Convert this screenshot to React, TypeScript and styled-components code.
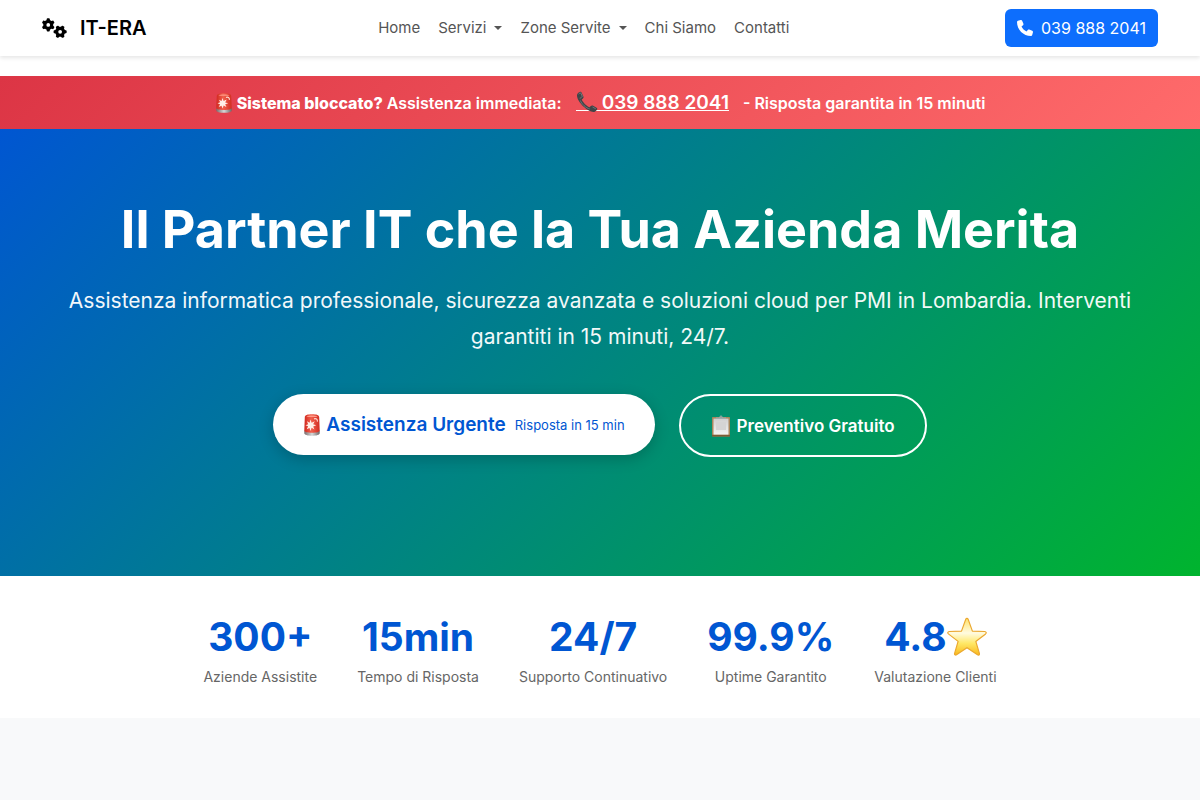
import React from "react";
import styled, { createGlobalStyle, css } from "styled-components";
import { FaGears, FaPhone } from "react-icons/fa6";

const GlobalStyle = createGlobalStyle`
  *, *::before, *::after { box-sizing: border-box; }
  html { min-height: 100%; background: #f8f9fa; }
  body {
    margin: 0;
    font-family: Inter, "Liberation Sans", sans-serif;
    font-size: 16px;
    line-height: 24px;
    color: #212529;
  }
  h1, p, ul, dl, dd { margin: 0; padding: 0; }
  a { color: inherit; text-decoration: none; }
`;

const Header = styled.header`
  background: #fff;
  padding-bottom: 20px;
`;

const NavBar = styled.nav`
  background: #fff;
  box-shadow: 0 2px 4px rgba(0, 0, 0, 0.1);
`;

const Container = styled.div`
  max-width: 1140px;
  margin: 0 auto;
  padding: 0 12px;
`;

const NavInner = styled(Container)`
  display: flex;
  align-items: center;
  justify-content: space-between;
  min-height: 56px;
`;

const Brand = styled.a`
  display: flex;
  align-items: center;
  gap: 13px;
  margin-right: 16px;
  font-size: 20px;
  font-weight: 600;
  color: #000;
  svg { width: 25px; height: 20px; }
`;

const NavList = styled.ul`
  display: flex;
  gap: 18px;
  list-style: none;
  color: #555;
`;

const NavLink = styled.a<{ $menu?: boolean }>`
  display: flex;
  align-items: center;
  font-size: 15px;
  ${({ $menu }) =>
    $menu &&
    css`
      &::after {
        content: "";
        margin-left: 8px;
        border-top: 4px solid;
        border-left: 4px solid transparent;
        border-right: 4px solid transparent;
      }
    `}
`;

const CallButton = styled.a`
  display: flex;
  align-items: center;
  gap: 8px;
  padding: 7px 12px;
  border-radius: 6px;
  background: #0d6efd;
  color: #fff;
  svg { width: 16px; height: 16px; }
`;

const Alert = styled.div`
  display: flex;
  flex-wrap: wrap;
  align-items: center;
  justify-content: center;
  gap: 0 14px;
  min-height: 53px;
  padding: 12px 16px;
  background: linear-gradient(135deg, #dc3545, #ff6b6b);
  color: #fff;
  font-size: 16px;
  font-weight: 600;
`;

const IconText = styled.span`
  display: inline-flex;
  align-items: center;
  gap: 4px;
`;

const Strong = styled.strong`
  font-weight: 800;
`;

const AlertPhone = styled.a`
  display: inline-flex;
  align-items: flex-end;
  gap: 4px;
  margin-top: 2px;
  border-bottom: 1px solid #fff;
  font-size: 19px;
  line-height: 14px;
  svg { margin: -5px 0 -3px; }
`;

const Hero = styled.section`
  padding: 60px 0 119px;
  background: linear-gradient(135deg, #0056d2, #00b42e);
  color: #fff;
  text-align: center;
`;

const Title = styled.h1`
  padding: 8px 0 20px;
  font-size: 52px;
  line-height: 66px;
  font-weight: 700;
`;

const Lead = styled.p`
  padding-bottom: 39px;
  font-size: 21px;
  line-height: 36px;
  opacity: 0.95;
`;

const Actions = styled.div`
  display: flex;
  flex-wrap: wrap;
  align-items: flex-start;
  justify-content: center;
  gap: 24px;
`;

const Action = styled.a<{ $outline?: boolean }>`
  display: inline-flex;
  align-items: center;
  padding: 16px 30px;
  border-radius: 50px;
  font-weight: 600;
  ${({ $outline }) =>
    $outline
      ? css`
          gap: 6px;
          min-height: 63px;
          border: 2px solid #fff;
          color: #fff;
          font-size: 17px;
        `
      : css`
          gap: 5px;
          min-height: 61px;
          background: #fff;
          color: #0056d2;
          font-size: 19px;
          box-shadow: 0 4px 15px rgba(0, 0, 0, 0.2);
        `}
`;

const Note = styled.small`
  margin-left: 4px;
  font-size: 13px;
  font-weight: 400;
`;

const Stats = styled.section`
  padding: 32px 16px 31px;
  background: #fff;
`;

const StatList = styled.dl`
  display: flex;
  flex-wrap: wrap;
  justify-content: center;
  gap: 24px 40px;
`;

const Stat = styled.div`
  display: flex;
  flex-direction: column-reverse;
  text-align: center;
`;

const StatValue = styled.dd`
  display: flex;
  align-items: center;
  justify-content: center;
  font-size: 39px;
  line-height: 58px;
  font-weight: 700;
  color: #0056d2;
`;

const StatLabel = styled.dt`
  font-size: 14px;
  line-height: 21px;
  color: #666;
`;

const Siren = ({ height }: { height: number }) => (
  <svg width="18" height={height} viewBox="1 0 18 20" preserveAspectRatio="none" aria-hidden="true">
    <defs>
      <linearGradient id="sirenGlass" x1="0" x2="1">
        <stop offset="0" stopColor="#d0281f" />
        <stop offset=".45" stopColor="#f2604d" />
        <stop offset="1" stopColor="#d12d22" />
      </linearGradient>
      <linearGradient id="sirenBase" x1="0" x2="1">
        <stop offset="0" stopColor="#7a6a6a" />
        <stop offset=".5" stopColor="#d5d8d8" />
        <stop offset="1" stopColor="#6e6666" />
      </linearGradient>
    </defs>
    <path d="M2.300 15h15.400v2.500c0 1.400-3.300 2.300-7.700 2.300s-7.700-.9-7.700-2.300z" fill="url(#sirenBase)" />
    <path d="M2.800 3.200C2.800 1 5.500.3 10 .3s7.200.7 7.200 2.900L17.700 15c0 1.300-3.200 2-7.700 2s-7.700-.7-7.700-2z" fill="url(#sirenGlass)" />
    <path d="M4.500 2.300C6 1.200 14 1.200 15.500 2.300 14 3 6 3 4.500 2.300z" fill="#ff9a88" />
    <path d="M8.500 5l1.100 3 3.100-1.500-1.500 2.900 3 .9-3 1 1.200 2.700-2.800-1.400-1.100 2.900-1-2.800-2.700 1.200 1.300-2.700-2.600-1 2.700-.9-1.300-2.600 2.700 1.300z" fill="#fff0e8" />
    <path d="M12 4.500c2-.8 3.600.2 3.400 2.400" fill="none" stroke="#ffd9cf" strokeWidth="1.200" />
  </svg>
);

const Receiver = () => (
  <svg width="22" height="22" viewBox="0 0 22 22" aria-hidden="true">
    <path
      d="M1.200 3.200C2.300 1.300 4.300.2 5.400 1.200l2 4.200c.5 1.200-.2 2-1.500 2.900-.5 1.800 5.700 8 7.800 8 .9-1.500 2-2.200 3-1.700l3.900 2.100c1.500.9.3 3.200-1.800 4.100C13.500 22.800-.8 10.200 1.200 3.200z"
      fill="#414447"
    />
    <path d="M2.500 3.300c.6-1 1.700-1.600 2.300-1.200l1.500 3.200c-.8 1.200-1.700 1.800-2.600 1.900" fill="none" stroke="#7b7f82" strokeWidth=".9" />
    <path d="M4.400 9.500c1 3.400 5.700 7.700 9.300 8.400M16.500 16l3.300 1.800" fill="none" stroke="#74787b" strokeWidth=".9" />
  </svg>
);

const Clipboard = () => (
  <svg width="20" height="22" viewBox="0 0 20 22" aria-hidden="true">
    <defs>
      <linearGradient id="paper" x1="0" y1="0" x2="0" y2="1">
        <stop offset="0" stopColor="#cfcfcf" />
        <stop offset="1" stopColor="#f4f4f4" />
      </linearGradient>
    </defs>
    <rect x="1" y="2" width="18" height="19.500" rx=".8" fill="#a8865c" />
    <path d="M1 19.800h18v1.700H1z" fill="#7c5c36" />
    <path d="M2.500 3.600h15v16h-15z" fill="url(#paper)" />
    <path d="M5 7h10v8H5z" fill="#d4d4d4" />
    <path d="M5 4V2.500h3C8.400 2.500 8.700.5 10 .5s1.600 2 2 2h3V4z" fill="#a3aaab" />
    <circle cx="10" cy="1.800" r=".6" fill="#4d9278" />
  </svg>
);

const Star = () => (
  <svg width="40" height="40" viewBox="0 0 40 40" aria-hidden="true">
    <defs>
      <linearGradient id="starFill" x1="0" y1="0" x2="0" y2="1">
        <stop offset="0" stopColor="#ffe26b" />
        <stop offset=".4" stopColor="#fffbe0" />
        <stop offset=".68" stopColor="#ffe866" />
        <stop offset="1" stopColor="#f9b81c" />
      </linearGradient>
    </defs>
    <path
      d="M18.700 2.400c.5-1.300 2-1.300 2.500 0l4.200 11.700 12.400.4c1.400.1 1.900 1.500.8 2.400l-9.800 7.500 3.600 12c.4 1.400-.8 2.200-1.900 1.400L20 30.700 9.500 37.800c-1.100.8-2.300-.1-1.900-1.400l3.500-12-9.700-7.500c-1.100-.9-.6-2.300.8-2.400l12.300-.4z"
      fill="url(#starFill)"
      stroke="#eba830"
      strokeWidth="1.200"
      strokeLinejoin="round"
    />
  </svg>
);

const links = [
  { label: "Home" },
  { label: "Servizi", menu: true },
  { label: "Zone Servite", menu: true },
  { label: "Chi Siamo" },
  { label: "Contatti" },
];

const stats: { value: string; label: string; star?: boolean }[] = [
  { value: "300+", label: "Aziende Assistite" },
  { value: "15min", label: "Tempo di Risposta" },
  { value: "24/7", label: "Supporto Continuativo" },
  { value: "99.9%", label: "Uptime Garantito" },
  { value: "4.8", label: "Valutazione Clienti", star: true },
];

export default function App() {
  return (
    <>
      <GlobalStyle />
      <Header>
        <NavBar>
          <NavInner>
            <Brand href="#">
              <FaGears aria-hidden="true" />
              IT-ERA
            </Brand>
            <NavList>
              {links.map(({ label, menu }) => (
                <li key={label}>
                  <NavLink href="#" $menu={menu}>{label}</NavLink>
                </li>
              ))}
            </NavList>
            <CallButton href="tel:0398882041">
              <FaPhone aria-hidden="true" />
              039 888 2041
            </CallButton>
          </NavInner>
        </NavBar>
      </Header>
      <main>
        <Alert>
          <IconText>
            <Siren height={20} />
            <span><Strong>Sistema bloccato?</Strong> Assistenza immediata:</span>
          </IconText>
          <AlertPhone href="tel:0398882041">
            <Receiver />
            039 888 2041
          </AlertPhone>
          <span>- Risposta garantita in 15 minuti</span>
        </Alert>
        <Hero>
          <Container>
            <Title>Il Partner IT che la Tua Azienda Merita</Title>
            <Lead>
              Assistenza informatica professionale, sicurezza avanzata e soluzioni cloud per PMI in
              Lombardia. Interventi garantiti in 15 minuti, 24/7.
            </Lead>
            <Actions>
              <Action href="tel:0398882041">
                <Siren height={22} />
                Assistenza Urgente
                <Note>Risposta in 15 min</Note>
              </Action>
              <Action href="#preventivo" $outline>
                <Clipboard />
                Preventivo Gratuito
              </Action>
            </Actions>
          </Container>
        </Hero>
        <Stats>
          <StatList>
            {stats.map(({ value, label, star }) => (
              <Stat key={label}>
                <StatLabel>{label}</StatLabel>
                <StatValue>
                  {value}
                  {star && <Star />}
                </StatValue>
              </Stat>
            ))}
          </StatList>
        </Stats>
      </main>
    </>
  );
}
